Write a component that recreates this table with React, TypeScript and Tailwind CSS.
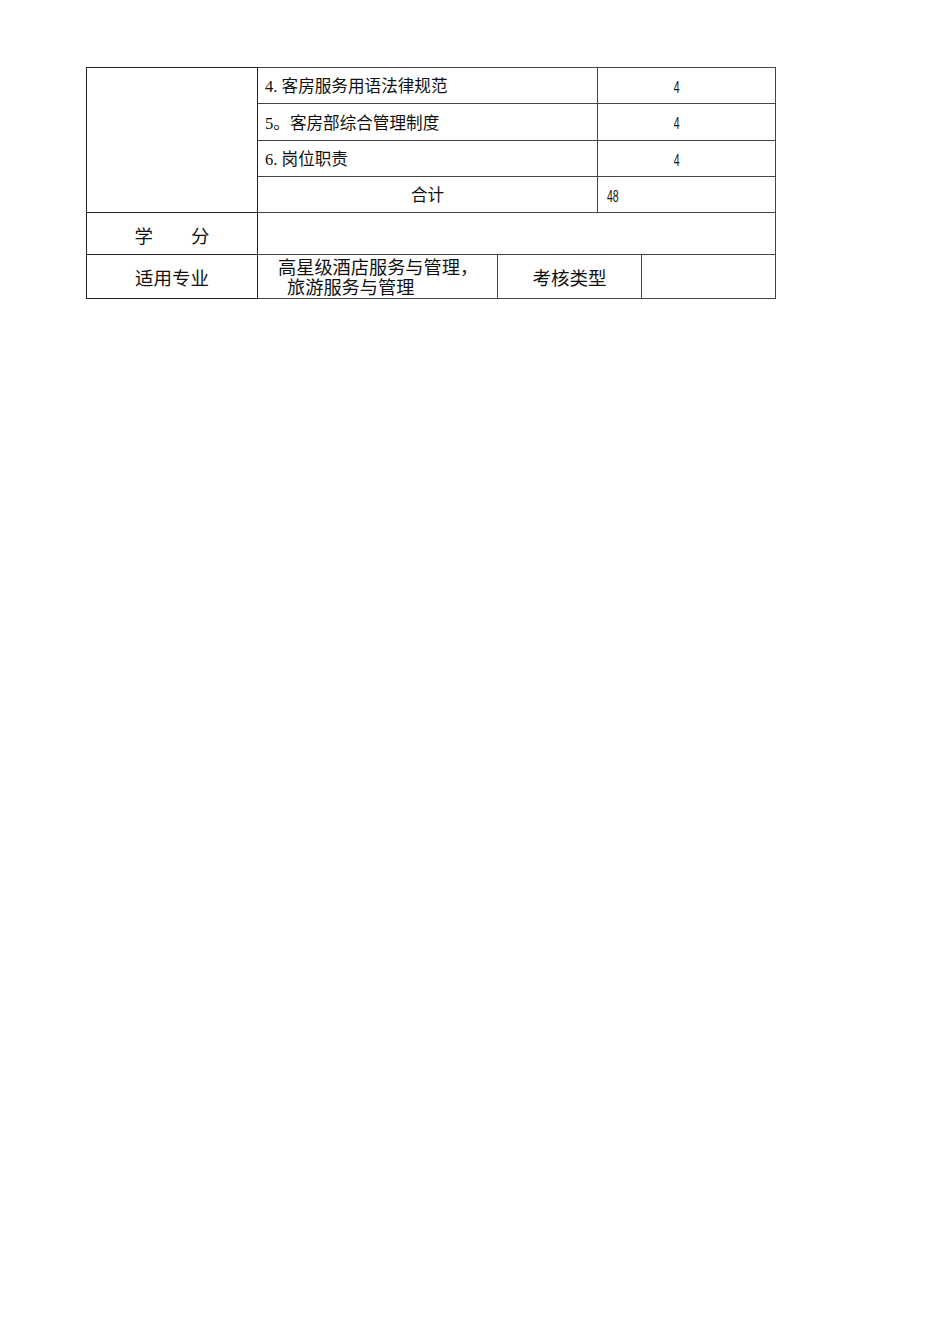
const serif = "font-['Liberation_Serif','Noto_Sans_CJK_SC',serif]";
const sans = "font-['Liberation_Sans','Noto_Sans_CJK_SC',sans-serif]";

const items = [
  { label: "4. 客房服务用语法律规范", hours: "4", h: "h-[36px]" },
  { label: "5。客房部综合管理制度", hours: "4", h: "h-[37px]" },
  { label: "6. 岗位职责", hours: "4", h: "h-[36px]" },
];

export default function App() {
  return (
    <div className="min-h-[1344px] w-[950px] bg-white pl-[86px] pt-[67px] text-[#111]">
      <table className="w-[689px] table-fixed border-collapse">
        <colgroup>
          <col className="w-[171px]" />
          <col className="w-[240px]" />
          <col className="w-[100px]" />
          <col className="w-[44px]" />
          <col className="w-[134px]" />
        </colgroup>
        <tbody>
          {items.map((it, i) => (
            <tr key={i} className={it.h}>
              {i === 0 && <td rowSpan={4} className="border border-[#222]" />}
              <td colSpan={2} className={`border border-[#444] px-[7px] pt-[4px] text-[16.6px] leading-none ${serif}`}>
                {it.label}
              </td>
              <td colSpan={2} className="border border-[#444] pr-[20px] pt-[2px] text-center">
                <span className={`inline-block scale-x-[0.62] text-[17px] leading-none ${sans}`}>{it.hours}</span>
              </td>
            </tr>
          ))}
          <tr className="h-[36px]">
            <td colSpan={2} className={`border border-[#444] pt-[4px] text-center text-[16.6px] leading-none ${serif}`}>合计</td>
            <td colSpan={2} className="border border-[#444] px-[9px] pt-[2px]">
              <span className={`inline-block origin-left scale-x-[0.62] text-[17px] leading-none ${sans}`}>48</span>
            </td>
          </tr>
          <tr className="h-[42px]">
            <td className={`border border-[#222] pt-[7px] text-center text-[18.5px] leading-none ${sans}`}>
              <span className="inline-flex gap-[38px]"><span>学</span><span>分</span></span>
            </td>
            <td colSpan={4} className="border border-[#444]" />
          </tr>
          <tr className="h-[44px]">
            <td className={`border border-[#222] pt-[6px] text-center text-[18.5px] leading-none ${sans}`}>适用专业</td>
            <td className={`border border-[#444] align-top pt-[3px] text-[18.2px] leading-[20px] ${serif}`}>
              <div className="pl-[20px]">高星级酒店服务与管理，</div>
              <div className="h-[19px] overflow-hidden pl-[29px]">旅游服务与管理</div>
            </td>
            <td colSpan={2} className={`border border-[#444] pt-[6px] text-center text-[18.5px] leading-none ${sans}`}>考核类型</td>
            <td className="border border-[#444]" />
          </tr>
        </tbody>
      </table>
    </div>
  );
}
